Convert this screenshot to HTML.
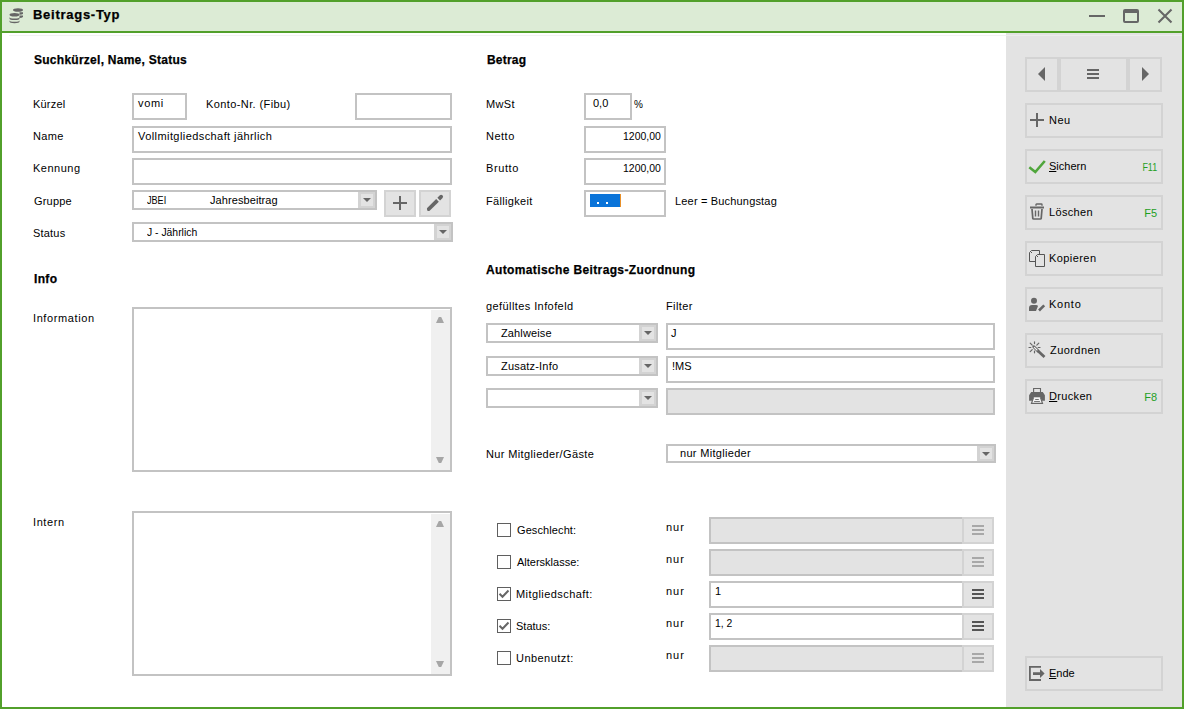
<!DOCTYPE html><html><head><meta charset="utf-8"><style>
*{margin:0;padding:0;box-sizing:border-box}
html,body{width:1184px;height:709px;overflow:hidden;background:#fff;font-family:"Liberation Sans",sans-serif;font-size:11px;color:#000}
div{position:absolute}
.t{white-space:pre;line-height:14px;height:14px}
.b{font-weight:bold;font-size:12px;-webkit-text-stroke:0.25px #000}
.in{border:2px solid #c3c3c3;background:#fff}
.dis{background:#e3e3e3}
.dd{background:#e3e3e3;border:2px solid #d3d3d3;border-left-width:3px}
.tri{width:0;height:0;border-left:4px solid transparent;border-right:4px solid transparent;border-top:4px solid #666}
.sb{background:#f0f0f0}
.up{width:8px;height:6px;background:#a6a6a6;clip-path:polygon(35% 0,65% 0,100% 100%,0 100%)}
.dn{width:8px;height:6px;background:#a6a6a6;clip-path:polygon(0 0,100% 0,65% 100%,35% 100%)}
.pb{background:#e3e3e3;border:2px solid #d3d3d3}
.btn{left:1025px;width:138px;height:35px;border:2px solid #d3d3d3;background:#e3e3e3}
.ck{border:1px solid #5f5f5f;background:#fff;width:14px;height:14px}
.fk{color:#1f9f1f}
</style></head><body>
<div class="a" style="left:2px;top:2px;width:1180px;height:29px;background:#dcebd5"></div>
<div class="a" style="left:0px;top:0px;width:1184px;height:2px;background:#52a02b"></div>
<div class="a" style="left:0px;top:31px;width:1184px;height:2px;background:#52a02b"></div>
<div class="a" style="left:0px;top:707px;width:1184px;height:2px;background:#52a02b"></div>
<div class="a" style="left:0px;top:0px;width:2px;height:709px;background:#52a02b"></div>
<div class="a" style="left:1182px;top:0px;width:2px;height:709px;background:#52a02b"></div>
<div class="a" style="left:1006px;top:33px;width:176px;height:674px;background:#e3e3e3"></div>
<div class="a" style="left:9px;top:35px;width:997px;height:1px;background:#f2f2f2"></div>
<div class="a" style="left:1006px;top:35px;width:176px;height:1px;background:#ececec"></div>
<svg style="position:absolute;left:8px;top:7px" width="17" height="17" viewBox="0 0 17 17">
<g fill="#666">
<ellipse cx="10" cy="3" rx="5" ry="1.8"/>
<path d="M11.5 5.3 h3.5 v1.6 a5 1.6 0 0 1 -3.5 0.9z"/>
<path d="M11.5 8.5 h3.5 v1.6 a5 1.6 0 0 1 -3.5 1z"/>
<ellipse cx="6.5" cy="7.8" rx="5" ry="1.8"/>
<path d="M1.5 10 a5 1.6 0 0 0 10 0 v1.4 a5 1.6 0 0 1 -10 0z"/>
<path d="M1.5 13.2 a5 1.6 0 0 0 10 0 v1.4 a5 1.6 0 0 1 -10 0z"/>
</g></svg>
<div class="a" style="left:1089px;top:15px;width:16px;height:2px;background:#666"></div>
<div style="left:1123px;top:9px;width:16px;height:14px;border:2px solid #666;border-top-width:4px;border-radius:2px"></div>
<svg style="position:absolute;left:1157px;top:8px" width="17" height="17" viewBox="0 0 17 17"><path d="M1.5 1.5 L14.5 14.5 M14.5 1.5 L1.5 14.5" stroke="#666" stroke-width="2.1"/></svg>
<div class="in" style="left:132px;top:93px;width:55px;height:27px;"></div>
<div class="in" style="left:355px;top:93px;width:97px;height:27px;"></div>
<div class="in" style="left:132px;top:126px;width:320px;height:27px;"></div>
<div class="in" style="left:132px;top:158px;width:320px;height:27px;"></div>
<div class="in" style="left:132px;top:190px;width:245px;height:20px;"></div>
<div class="dd" style="left:358px;top:192px;width:17px;height:16px;"></div>
<div class="tri" style="left:363px;top:198px"></div>
<div class="pb" style="left:384px;top:190px;width:32px;height:27px;"></div>
<div class="a" style="left:393px;top:202px;width:14px;height:2px;background:#666"></div>
<div class="a" style="left:399px;top:196px;width:2px;height:14px;background:#666"></div>
<div class="pb" style="left:419px;top:190px;width:32px;height:27px;"></div>
<svg style="position:absolute;left:424px;top:192px" width="22" height="22" viewBox="0 0 22 22"><g fill="#666"><path d="M2.96 16.16 L12.16 6.96 L14.84 9.64 L5.64 18.84 Q2.8 19.7 2.96 16.16 Z"/><path d="M13.36 5.76 L15.86 3.26 A1.9 1.9 0 0 1 18.54 5.94 L16.04 8.44 Z"/></g></svg>
<div class="in" style="left:132px;top:222px;width:321px;height:20px;"></div>
<div class="dd" style="left:434px;top:224px;width:17px;height:16px;"></div>
<div class="tri" style="left:439px;top:230px"></div>
<div class="in" style="left:132px;top:307px;width:320px;height:165px;"></div>
<div class="sb" style="left:431px;top:310px;width:19px;height:160px;"></div>
<div class="up" style="left:436px;top:317px"></div>
<div class="dn" style="left:436px;top:457px"></div>
<div class="in" style="left:132px;top:511px;width:320px;height:165px;"></div>
<div class="sb" style="left:431px;top:514px;width:19px;height:160px;"></div>
<div class="up" style="left:436px;top:521px"></div>
<div class="dn" style="left:436px;top:661px"></div>
<div class="in" style="left:584px;top:93px;width:48px;height:27px;"></div>
<div class="in" style="left:584px;top:126px;width:82px;height:27px;"></div>
<div class="in" style="left:584px;top:158px;width:82px;height:27px;"></div>
<div class="in" style="left:584px;top:190px;width:82px;height:27px;"></div>
<div class="a" style="left:590px;top:194px;width:30px;height:13px;background:#0a74d9"></div>
<div class="a" style="left:620px;top:194px;width:1px;height:13px;background:#e8902a"></div>
<div class="a" style="left:597px;top:202px;width:2px;height:2px;background:#fff;width:1.5px;height:1.5px"></div>
<div class="a" style="left:606px;top:202px;width:2px;height:2px;background:#fff;width:1.5px;height:1.5px"></div>
<div class="in" style="left:486px;top:323px;width:172px;height:20px;"></div>
<div class="dd" style="left:639px;top:325px;width:17px;height:16px;"></div>
<div class="tri" style="left:644px;top:331px"></div>
<div class="in" style="left:666px;top:323px;width:329px;height:27px;"></div>
<div class="in" style="left:486px;top:356px;width:172px;height:20px;"></div>
<div class="dd" style="left:639px;top:358px;width:17px;height:16px;"></div>
<div class="tri" style="left:644px;top:364px"></div>
<div class="in" style="left:666px;top:356px;width:329px;height:27px;"></div>
<div class="in" style="left:486px;top:388px;width:172px;height:20px;"></div>
<div class="dd" style="left:639px;top:390px;width:17px;height:16px;"></div>
<div class="tri" style="left:644px;top:396px"></div>
<div class="in dis" style="left:666px;top:388px;width:329px;height:27px;"></div>
<div class="in" style="left:666px;top:444px;width:330px;height:19px;"></div>
<div class="dd" style="left:977px;top:446px;width:17px;height:15px;"></div>
<div class="tri" style="left:982px;top:452px"></div>
<div class="ck" style="left:497px;top:523px;width:14px;height:14px;"></div>
<div class="in dis" style="left:709px;top:517px;width:255px;height:27px;"></div>
<div class="pb" style="left:962px;top:517px;width:32px;height:27px;"></div>
<div class="a" style="left:972px;top:525px;width:12px;height:2px;background:#a8a8a8"></div>
<div class="a" style="left:972px;top:529px;width:12px;height:2px;background:#a8a8a8"></div>
<div class="a" style="left:972px;top:533px;width:12px;height:2px;background:#a8a8a8"></div>
<div class="ck" style="left:497px;top:555px;width:14px;height:14px;"></div>
<div class="in dis" style="left:709px;top:549px;width:255px;height:27px;"></div>
<div class="pb" style="left:962px;top:549px;width:32px;height:27px;"></div>
<div class="a" style="left:972px;top:557px;width:12px;height:2px;background:#a8a8a8"></div>
<div class="a" style="left:972px;top:561px;width:12px;height:2px;background:#a8a8a8"></div>
<div class="a" style="left:972px;top:565px;width:12px;height:2px;background:#a8a8a8"></div>
<div class="ck" style="left:497px;top:587px;width:14px;height:14px;"></div>
<svg style="position:absolute;left:497px;top:587px" width="14" height="14" viewBox="0 0 14 14"><path d="M2.5 6.8 L5.5 9.8 L11.5 3.5" stroke="#666" stroke-width="2" fill="none"/></svg>
<div class="in" style="left:709px;top:581px;width:255px;height:27px;"></div>
<div class="pb" style="left:962px;top:581px;width:32px;height:27px;"></div>
<div class="a" style="left:972px;top:589px;width:12px;height:2px;background:#555"></div>
<div class="a" style="left:972px;top:593px;width:12px;height:2px;background:#555"></div>
<div class="a" style="left:972px;top:597px;width:12px;height:2px;background:#555"></div>
<div class="ck" style="left:497px;top:619px;width:14px;height:14px;"></div>
<svg style="position:absolute;left:497px;top:619px" width="14" height="14" viewBox="0 0 14 14"><path d="M2.5 6.8 L5.5 9.8 L11.5 3.5" stroke="#666" stroke-width="2" fill="none"/></svg>
<div class="in" style="left:709px;top:613px;width:255px;height:27px;"></div>
<div class="pb" style="left:962px;top:613px;width:32px;height:27px;"></div>
<div class="a" style="left:972px;top:621px;width:12px;height:2px;background:#555"></div>
<div class="a" style="left:972px;top:625px;width:12px;height:2px;background:#555"></div>
<div class="a" style="left:972px;top:629px;width:12px;height:2px;background:#555"></div>
<div class="ck" style="left:497px;top:651px;width:14px;height:14px;"></div>
<div class="in dis" style="left:709px;top:645px;width:255px;height:27px;"></div>
<div class="pb" style="left:962px;top:645px;width:32px;height:27px;"></div>
<div class="a" style="left:972px;top:653px;width:12px;height:2px;background:#a8a8a8"></div>
<div class="a" style="left:972px;top:657px;width:12px;height:2px;background:#a8a8a8"></div>
<div class="a" style="left:972px;top:661px;width:12px;height:2px;background:#a8a8a8"></div>
<div class="pb" style="left:1025px;top:57px;width:34px;height:35px;"></div>
<div class="pb" style="left:1059px;top:57px;width:69px;height:35px;"></div>
<div class="pb" style="left:1128px;top:57px;width:34px;height:35px;"></div>
<div style="left:1038px;top:67px;width:0;height:0;border-top:7px solid transparent;border-bottom:7px solid transparent;border-right:7px solid #666"></div>
<div style="left:1142px;top:67px;width:0;height:0;border-top:7px solid transparent;border-bottom:7px solid transparent;border-left:7px solid #666"></div>
<div class="a" style="left:1087px;top:69px;width:12px;height:2px;background:#666"></div>
<div class="a" style="left:1087px;top:73px;width:12px;height:2px;background:#666"></div>
<div class="a" style="left:1087px;top:77px;width:12px;height:2px;background:#666"></div>
<div class="btn" style="top:103px"></div>
<div class="btn" style="top:149px"></div>
<div class="btn" style="top:195px"></div>
<div class="btn" style="top:241px"></div>
<div class="btn" style="top:287px"></div>
<div class="btn" style="top:333px"></div>
<div class="btn" style="top:379px"></div>
<div class="btn" style="top:656px"></div>
<svg style="position:absolute;left:1027px;top:110px" width="20" height="20" viewBox="0 0 20 20"><path d="M10 3 V17 M3 10 H17" stroke="#666" stroke-width="2"/></svg>
<svg style="position:absolute;left:1027px;top:157px" width="20" height="20" viewBox="0 0 20 20"><path d="M2.3 10.2 L8.3 15 L17.8 4" stroke="#50a63c" stroke-width="2.6" fill="none"/></svg>
<svg style="position:absolute;left:1027px;top:202px" width="20" height="20" viewBox="0 0 20 20"><g fill="none" stroke="#666"><path d="M9 3.7 V2.6 Q9 2 9.6 2 H14.4 Q15 2 15 2.6 V3.7" stroke-width="1.4"/><path d="M3 5.5 H17" stroke-width="2"/><path d="M5 7 L5.8 16.3 Q5.9 17 6.6 17 H13.4 Q14.1 17 14.2 16.3 L15 7" stroke-width="1.7"/><path d="M8.5 8.5 V14.5 M11.5 8.5 V14.5" stroke-width="1.4"/></g></svg>
<svg style="position:absolute;left:1027px;top:248px" width="20" height="20" viewBox="0 0 20 20"><g fill="#e3e3e3" stroke="#555" stroke-width="1"><path d="M2.5 4.5 L4.5 2.5 H12.5 V13.5 H2.5 Z"/><path d="M8.5 8.5 L10.5 6.5 H17.5 V18.5 H8.5 Z"/></g><path d="M4 4 h1 v1 h-1z M10 8 h1 v1 h-1z" fill="#555"/></svg>
<svg style="position:absolute;left:1027px;top:296px" width="20" height="20" viewBox="0 0 20 20"><g fill="#666"><circle cx="7" cy="4.8" r="3"/><path d="M2 15 V12 Q2 9 5 9 H9 Q10.5 9 11 10 L9 15 Z"/><path d="M12 14.5 L17.2 9.3" stroke="#666" stroke-width="2.6"/></g></svg>
<svg style="position:absolute;left:1027px;top:339px" width="20" height="20" viewBox="0 0 20 20"><g stroke="#666" fill="none" stroke-linecap="round"><path d="M7.5 2.8 V4.6 M7.5 12.1 V13.8 M2 8.5 H3.8 M11.2 8.5 H13 M3.2 4.2 L5.2 6.2 M11.8 4.2 L9.8 6.2 M3.2 12.6 L5.2 10.6" stroke-width="1.2"/><path d="M10.5 11.5 L17.5 18" stroke-width="2.8" stroke-linecap="butt"/><path d="M6.8 7.8 L10.8 11.8" stroke-width="3"/><path d="M7.3 8.3 L10 11" stroke="#f4f4f4" stroke-width="1.1"/></g></svg>
<svg style="position:absolute;left:1027px;top:386px" width="20" height="20" viewBox="0 0 20 20"><path d="M6.6 2.5 H13.5 V7 H6.6 Z" stroke="#666" fill="none" stroke-width="1.1"/><path d="M4.2 6 H15.8 L17.9 9.2 V14.8 H14.8 L13.4 11.4 H6.6 L5.2 14.8 H2.1 V9.2 Z" fill="#666"/><path d="M6.6 11.4 L4.5 17.3 H15.5 L13.4 11.4" stroke="#666" fill="#f5f5f5" stroke-width="1.2"/><path d="M8.2 13.5 H11.8 M7.1 15.5 H12.9" stroke="#666" stroke-width="0.9"/></svg>
<svg style="position:absolute;left:1027px;top:662px" width="20" height="20" viewBox="0 0 20 20"><path d="M14 4.9 H2.9 V18 H14" fill="none" stroke="#666" stroke-width="1.8"/><path d="M6 10.2 H13 V7 L17.6 11.5 L13 16 V12.9 H6 Z" fill="#666"/></svg>
<div class="t b" style="left:33px;top:8px;font-size:13px;letter-spacing:0.727px">Beitrags-Typ</div>
<div class="t b" style="left:34px;top:53px;;letter-spacing:0.261px">Suchkürzel, Name, Status</div>
<div class="t " style="left:33px;top:97px;;letter-spacing:0.200px">Kürzel</div>
<div class="t " style="left:138px;top:96px;;letter-spacing:0.667px">vomi</div>
<div class="t " style="left:206px;top:97px;;letter-spacing:0.400px">Konto-Nr. (Fibu)</div>
<div class="t " style="left:33px;top:129px;;letter-spacing:0.333px">Name</div>
<div class="t " style="left:138px;top:129px;;letter-spacing:0.423px">Vollmitgliedschaft jährlich</div>
<div class="t " style="left:33px;top:161px;;letter-spacing:0.500px">Kennung</div>
<div class="t " style="left:34px;top:194px;;letter-spacing:0.200px">Gruppe</div>
<div class="t " style="left:147px;top:193px;;transform:scaleX(0.826);transform-origin:left center">JBEI</div>
<div class="t " style="left:210px;top:193px;;letter-spacing:0.083px">Jahresbeitrag</div>
<div class="t " style="left:33px;top:226px;;letter-spacing:0.200px">Status</div>
<div class="t " style="left:147px;top:225px;;transform:scaleX(0.943);transform-origin:left center">J - Jährlich</div>
<div class="t b" style="left:34px;top:272px;;letter-spacing:0.333px">Info</div>
<div class="t " style="left:33px;top:311px;;letter-spacing:0.600px">Information</div>
<div class="t " style="left:33px;top:515px;;letter-spacing:0.600px">Intern</div>
<div class="t b" style="left:487px;top:53px;;letter-spacing:0.200px">Betrag</div>
<div class="t " style="left:486px;top:97px;;letter-spacing:0.333px">MwSt</div>
<div class="t " style="left:593px;top:96px;">0,0</div>
<div class="t " style="left:634px;top:98px;font-size:10px">%</div>
<div class="t " style="left:486px;top:129px;;letter-spacing:0.500px">Netto</div>
<div class="t " style="right:523px;top:129px;;transform:scaleX(0.949);transform-origin:right center">1200,00</div>
<div class="t " style="left:486px;top:161px;;letter-spacing:0.600px">Brutto</div>
<div class="t " style="right:523px;top:161px;;transform:scaleX(0.949);transform-origin:right center">1200,00</div>
<div class="t " style="left:486px;top:194px;;letter-spacing:0.333px">Fälligkeit</div>
<div class="t " style="left:675px;top:194px;;letter-spacing:0.176px">Leer = Buchungstag</div>
<div class="t b" style="left:486px;top:263px;;letter-spacing:0.367px">Automatische Beitrags-Zuordnung</div>
<div class="t " style="left:486px;top:299px;;letter-spacing:0.412px">gefülltes Infofeld</div>
<div class="t " style="left:666px;top:299px;;letter-spacing:0.400px">Filter</div>
<div class="t " style="left:501px;top:326px;;letter-spacing:0.125px">Zahlweise</div>
<div class="t " style="left:671px;top:326px;">J</div>
<div class="t " style="left:501px;top:359px;;letter-spacing:0.200px">Zusatz-Info</div>
<div class="t " style="left:672px;top:359px;">!MS</div>
<div class="t " style="left:486px;top:447px;;letter-spacing:0.368px">Nur Mitglieder/Gäste</div>
<div class="t " style="left:680px;top:446px;;letter-spacing:0.308px">nur Mitglieder</div>
<div class="t " style="left:517px;top:523px;;letter-spacing:0.100px">Geschlecht:</div>
<div class="t " style="left:666px;top:520px;;letter-spacing:1.000px">nur</div>
<div class="t " style="left:517px;top:555px;">Altersklasse:</div>
<div class="t " style="left:666px;top:552px;;letter-spacing:1.000px">nur</div>
<div class="t " style="left:516px;top:587px;;letter-spacing:0.429px">Mitgliedschaft:</div>
<div class="t " style="left:666px;top:584px;;letter-spacing:1.000px">nur</div>
<div class="t " style="left:715px;top:584px;">1</div>
<div class="t " style="left:516px;top:619px;">Status:</div>
<div class="t " style="left:666px;top:616px;;letter-spacing:1.000px">nur</div>
<div class="t " style="left:715px;top:616px;;transform:scaleX(0.941);transform-origin:left center">1, 2</div>
<div class="t " style="left:516px;top:651px;;letter-spacing:0.444px">Unbenutzt:</div>
<div class="t " style="left:666px;top:648px;;letter-spacing:1.000px">nur</div>
<div class="t " style="left:1049px;top:113px;;letter-spacing:0.500px">Neu</div>
<div class="t " style="left:1049px;top:159px;"><u>S</u>ichern</div>
<div class="t fk" style="right:27px;top:160px;;transform:scaleX(0.812);transform-origin:right center">F11</div>
<div class="t " style="left:1049px;top:205px;;letter-spacing:0.333px">Löschen</div>
<div class="t fk" style="right:27px;top:206px;">F5</div>
<div class="t " style="left:1049px;top:251px;;letter-spacing:0.429px">Kopieren</div>
<div class="t " style="left:1049px;top:297px;;letter-spacing:0.750px">Konto</div>
<div class="t " style="left:1050px;top:343px;;letter-spacing:0.429px">Zuordnen</div>
<div class="t " style="left:1049px;top:389px;;letter-spacing:0.333px"><u>D</u>rucken</div>
<div class="t fk" style="right:27px;top:390px;">F8</div>
<div class="t " style="left:1049px;top:666px;"><u>E</u>nde</div>
</body></html>
